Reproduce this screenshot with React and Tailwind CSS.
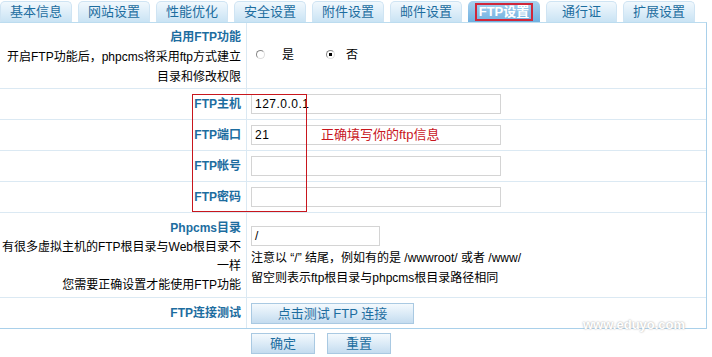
import React from 'react';

const tabs = ["基本信息", "网站设置", "性能优化", "安全设置", "附件设置", "邮件设置", "FTP设置", "通行证", "扩展设置"];

const font = { fontFamily: '"Liberation Sans", "Noto Sans CJK SC", sans-serif' };

function Label({ children }) {
  return <span className="font-bold text-[#1d6d9f]">{children}</span>;
}

function Input({ value, w = "w-[250px]" }) {
  return (
    <div className={`${w} h-[20px] border border-[#d4d4d4] bg-white px-[3px] text-[12px] leading-[18px] tracking-[0.5px] text-black`}>
      {value}
    </div>
  );
}

function Btn({ children, w }) {
  return (
    <div className={`${w} h-[21px] border border-[#a9c9e2] bg-gradient-to-b from-[#f4f9fd] via-[#dcebf7] to-[#c4dcef] text-center text-[13px] leading-[19px] text-[#1d6d9f]`}>
      {children}
    </div>
  );
}

export default function App() {
  return (
    <div className="relative w-[712px] h-[357px] bg-white text-[12px] text-black overflow-hidden" style={font}>
      {/* TABS */}
      <div className="flex h-[22px] items-end gap-[6px] pt-[1px]">
        {tabs.map((t, i) => (
          t === "FTP设置" ? (
            <div key={t} className="w-[72px] h-[21px] rounded-t-[5px] bg-gradient-to-b from-[#a9d1ee] to-[#6fb0e0] flex items-center justify-center">
              <span className="border-2 border-[#d0263a] px-[2px] leading-[14px] text-[13px] font-bold text-white">{t}</span>
            </div>
          ) : (
            <div key={t} className={`${i === 7 ? "w-[71px]" : "w-[72px]"} h-[21px] rounded-t-[5px] border border-b-0 border-[#cfe4f3] bg-gradient-to-b from-[#f1f8fd] to-[#c9e3f4] text-center text-[13px] leading-[20px] text-[#1d6d9f]`}>
              {t}
            </div>
          )
        ))}
      </div>

      {/* PANEL */}
      <div className="w-[707px] border-t border-r border-b border-[#a9d0ea] border-t-[#bcdcef]">
        {/* row 1 */}
        <div className="flex h-[66px] border-b border-[#dbe9f3]">
          <div className="w-[247px] border-r border-[#dbe9f3] pr-[5px] pt-[4px] text-right leading-[20px]">
            <div><Label>启用FTP功能</Label></div>
            <div>开启FTP功能后，phpcms将采用ftp方式建立</div>
            <div>目录和修改权限</div>
          </div>
          <div className="flex items-center pl-[9px] pb-[2px]">
            <span className="w-[9px] h-[9px] rounded-full border border-l-[#888] border-t-[#888] border-r-[#ddd] border-b-[#ddd]" />
            <span className="ml-[17px]">是</span>
            <span className="ml-[32px] w-[9px] h-[9px] rounded-full border border-l-[#888] border-t-[#888] border-r-[#ddd] border-b-[#ddd] flex items-center justify-center">
              <span className="w-[3px] h-[3px] bg-black" />
            </span>
            <span className="ml-[11px]">否</span>
          </div>
        </div>

        {/* ftp rows */}
        {[["FTP主机", "127.0.0.1"], ["FTP端口", "21"], ["FTP帐号", ""], ["FTP密码", ""]].map(([l, v], i) => (
          <div key={l} className="flex h-[31px] border-b border-[#dbe9f3]">
            <div className="w-[247px] border-r border-[#dbe9f3] pr-[5px] flex items-center justify-end">
              <Label>{l}</Label>
            </div>
            <div className="flex items-center pl-[4px]">
              <Input value={v} />
              {i === 1 && <span className="absolute left-[321px] text-[13px] text-[#c8161d]">正确填写你的ftp信息</span>}
            </div>
          </div>
        ))}

        {/* phpcms dir */}
        <div className="flex h-[85px] border-b border-[#dbe9f3]">
          <div className="w-[247px] border-r border-[#dbe9f3] pr-[5px] pt-[6px] text-right leading-[19px]">
            <div><Label>Phpcms目录</Label></div>
            <div>有很多虚拟主机的FTP根目录与Web根目录不</div>
            <div>一样</div>
            <div>您需要正确设置才能使用FTP功能</div>
          </div>
          <div className="pl-[4px] pt-[13px] leading-[20px]">
            <Input value="/" w="w-[129px]" />
            <div className="mt-[2px]">注意以 “/” 结尾，例如有的是 /wwwroot/ 或者 /www/</div>
            <div>留空则表示ftp根目录与phpcms根目录路径相同</div>
          </div>
        </div>

        {/* test */}
        <div className="flex h-[30px]">
          <div className="w-[247px] border-r border-[#dbe9f3] pr-[5px] flex items-center justify-end">
            <Label>FTP连接测试</Label>
          </div>
          <div className="flex items-center pl-[4px]">
            <Btn w="w-[163px]">点击测试 FTP 连接</Btn>
          </div>
        </div>
      </div>

      {/* submit buttons */}
      <div className="flex gap-[12px] pl-[251px] pt-[4px]">
        <Btn w="w-[64px]">确定</Btn>
        <Btn w="w-[64px]">重置</Btn>
      </div>

      {/* red highlight box */}
      <div className="absolute left-[192px] top-[94px] w-[115px] h-[118px] border border-[#c8161d]" />

      {/* watermark */}
      <div className="absolute left-[583px] top-[315px] text-[13px] font-bold text-white [text-shadow:0_0_2px_#999]">www.eduyo.com</div>
    </div>
  );
}
